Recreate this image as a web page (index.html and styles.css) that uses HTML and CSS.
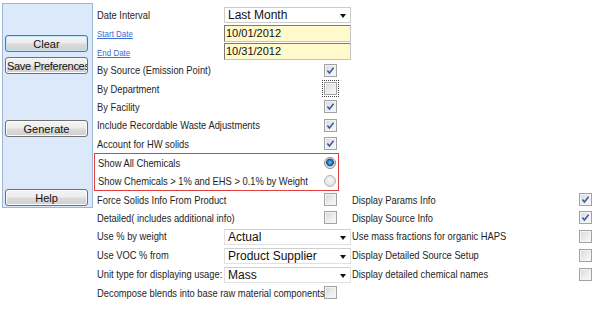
FILE: index.html
```html
<!DOCTYPE html>
<html>
<head>
<meta charset="utf-8">
<link rel="stylesheet" href="styles.css">
</head>
<body>
<div class="page">
  <aside class="panel">
    <button class="btn btn-focus">Clear</button>
    <button class="btn btn-clip btn-save">Save Preferences</button>
    <button class="btn btn-gen">Generate</button>
    <button class="btn btn-help">Help</button>
  </aside>
  <main class="form">
    <div class="col-left">
      <div class="row row-sel row-first"><span class="lbl">Date Interval</span><div class="select">Last Month<span class="arrow"></span></div></div>
      <div class="row row-date"><span class="cell"><a class="link" href="#">Start Date</a></span><div class="input">10/01/2012</div></div>
      <div class="row row-date"><span class="cell"><a class="link" href="#">End Date</a></span><div class="input">10/31/2012</div></div>
      <div class="row row-cb"><span class="lbl">By Source (Emission Point)</span><span class="cb on"><svg viewBox="0 0 11 11" width="11" height="11"><path d="M2.4 5.6 L4.4 8 L8.6 2.8" fill="none" stroke="#3856a6" stroke-width="1.5"/></svg></span></div>
      <div class="row row-cb"><span class="lbl">By Department</span><span class="cb focus"></span></div>
      <div class="row row-cb"><span class="lbl">By Facility</span><span class="cb on"><svg viewBox="0 0 11 11" width="11" height="11"><path d="M2.4 5.6 L4.4 8 L8.6 2.8" fill="none" stroke="#3856a6" stroke-width="1.5"/></svg></span></div>
      <div class="row row-cb"><span class="lbl">Include Recordable Waste Adjustments</span><span class="cb on"><svg viewBox="0 0 11 11" width="11" height="11"><path d="M2.4 5.6 L4.4 8 L8.6 2.8" fill="none" stroke="#3856a6" stroke-width="1.5"/></svg></span></div>
      <div class="row row-cb"><span class="lbl">Account for HW solids</span><span class="cb on"><svg viewBox="0 0 11 11" width="11" height="11"><path d="M2.4 5.6 L4.4 8 L8.6 2.8" fill="none" stroke="#3856a6" stroke-width="1.5"/></svg></span></div>
      <div class="redbox">
        <div class="row row-radio"><span class="lbl">Show All Chemicals</span><span class="radio on"></span></div>
        <div class="row row-radio"><span class="lbl">Show Chemicals &gt; 1% and EHS &gt; 0.1% by Weight</span><span class="radio"></span></div>
      </div>
    </div>
    <div class="bottom">
      <div class="row row-cb b-a"><span class="lbl">Force Solids Info From Product</span><span class="cb"></span></div>
      <div class="row row-cb row-right b-a"><span class="lbl">Display Params Info</span><span class="cb on"><svg viewBox="0 0 11 11" width="11" height="11"><path d="M2.4 5.6 L4.4 8 L8.6 2.8" fill="none" stroke="#3856a6" stroke-width="1.5"/></svg></span></div>
      <div class="row row-cb b-a"><span class="lbl">Detailed( includes additional info)</span><span class="cb"></span></div>
      <div class="row row-cb row-right b-a"><span class="lbl">Display Source Info</span><span class="cb on"><svg viewBox="0 0 11 11" width="11" height="11"><path d="M2.4 5.6 L4.4 8 L8.6 2.8" fill="none" stroke="#3856a6" stroke-width="1.5"/></svg></span></div>
      <div class="row row-sel b-b"><span class="lbl">Use % by weight</span><div class="select select-sm">Actual<span class="arrow"></span></div></div>
      <div class="row row-cb row-right b-b"><span class="lbl">Use mass fractions for organic HAPS</span><span class="cb"></span></div>
      <div class="row row-sel b-b"><span class="lbl">Use VOC % from</span><div class="select select-sm">Product Supplier<span class="arrow"></span></div></div>
      <div class="row row-cb row-right b-b"><span class="lbl">Display Detailed Source Setup</span><span class="cb"></span></div>
      <div class="row row-sel b-b"><span class="lbl">Unit type for displaying usage:</span><div class="select select-sm">Mass<span class="arrow"></span></div></div>
      <div class="row row-cb row-right b-b"><span class="lbl">Display detailed chemical names</span><span class="cb"></span></div>
      <div class="row row-cb b-a"><span class="lbl">Decompose blends into base raw material components</span><span class="cb"></span></div>
    </div>
  </main>
</div>
</body>
</html>
```
FILE: styles.css
```css
html, body {
  margin: 0;
  padding: 0;
  background: #ffffff;
}
body {
  font-family: "Liberation Sans", Arial, sans-serif;
  font-size: 11px;
  color: #1e1e1e;
}
.page {
  display: flex;
  align-items: flex-start;
  padding-top: 3px;
}
.panel {
  margin-left: 2px;
  width: 91px;
  height: 205px;
  box-sizing: border-box;
  border: 1px solid #9db6d3;
  background: #dbe9fb;
  display: flex;
  flex-direction: column;
  padding: 31px 4px 0 2px;
}
.btn {
  height: 17px;
  box-sizing: border-box;
  font-family: "Liberation Sans", Arial, sans-serif;
  font-size: 11px;
  color: #111;
  border: 1px solid #707070;
  border-radius: 3px;
  background: linear-gradient(#f4f4f4 0%, #ececec 48%, #dcdcdc 52%, #cfcfcf 100%);
  box-shadow: inset 0 0 0 1px #fbfbfb;
  padding: 0 1px;
  white-space: nowrap;
  overflow: hidden;
  line-height: 14px;
  text-align: center;
}
.btn-focus {
  border-color: #3c7fb1;
  box-shadow: inset 0 0 0 1px #c4e5f6;
}
.btn-clip { text-align: left; letter-spacing: -0.3px; }
.btn-save { margin-top: 5px; }
.btn-gen { margin-top: 46px; }
.btn-help { margin-top: 52px; }

.form {
  margin-left: 4px;
  padding-top: 2px;
  width: 495px;
}
.col-left {
  width: 255px;
  display: flex;
  flex-direction: column;
}
.row {
  display: grid;
  align-items: center;
  white-space: nowrap;
}
.row-sel {
  grid-template-columns: 127px 127px;
  height: 19px;
}
.row-date {
  grid-template-columns: 127px 127px;
  height: 18.5px;
}
.row-cb {
  grid-template-columns: minmax(0, 1fr) 13px;
  padding-right: 15px;
  height: 18.4px;
}
.lbl {
  display: inline-block;
  justify-self: start;
  transform: scaleX(0.85);
  transform-origin: 0 50%;
}
.cell { display: block; }
.link {
  display: inline-block;
  color: #3b6fd4;
  text-decoration: underline;
  font-size: 9.5px;
  transform: scaleX(0.84);
  transform-origin: 0 50%;
}
.select {
  position: relative;
  height: 16px;
  box-sizing: border-box;
  border: 1px solid #cdcdcd;
  background: #fff;
  font-family: "Liberation Sans", Arial, sans-serif;
  font-size: 12px;
  color: #111;
  line-height: 14px;
  padding-left: 3px;
  margin-top: 1px;
}
.select-sm { border-color: #e0e0e0; border-top-color: #cfcfcf; }
.arrow {
  position: absolute;
  right: 4px;
  top: 6px;
  width: 0;
  height: 0;
  border-left: 3.5px solid transparent;
  border-right: 3.5px solid transparent;
  border-top: 4px solid #111;
}
.input {
  height: 17px;
  box-sizing: border-box;
  border: 1px solid #c4c4c4;
  border-top-color: #7a7a7a;
  border-left-color: #7a7a7a;
  background: #fff9cc;
  font-family: "Liberation Sans", Arial, sans-serif;
  font-size: 11px;
  line-height: 15px;
  padding-left: 1px;
  color: #111;
}
.cb {
  width: 13px;
  height: 13px;
  box-sizing: border-box;
  border: 1px solid #a2a2a2;
  background: linear-gradient(135deg, #d8d8d8 0%, #eeeeee 60%, #fafafa 100%);
  box-shadow: inset 0 0 0 1px #f4f4f4;
  display: flex;
  align-items: center;
  justify-content: center;
}
.cb svg { display: block; }
.cb.focus {
  outline: 1px dotted #444;
  outline-offset: 1px;
}
.redbox {
  margin-left: -3px;
  width: 245px;
  box-sizing: border-box;
  border: 1px solid #e2403f;
  padding: 0 2px 0 3px;
}
.row-radio {
  grid-template-columns: minmax(0, 1fr) 12px;
  height: 18px;
}
.radio {
  width: 12px;
  height: 12px;
  box-sizing: border-box;
  border-radius: 50%;
  border: 1px solid #b4b4b4;
  background: radial-gradient(circle at 50% 40%, #fafafa 0%, #e2e2e2 70%, #d2d2d2 100%);
}
.radio.on {
  border-color: #8c8c8c;
  background: radial-gradient(circle at 50% 45%, #7fc3ee 0%, #2a77b8 30%, #0e4c86 48%, #dedede 56%, #eeeeee 100%);
}
.bottom {
  display: grid;
  grid-template-columns: 255px 240px;
  grid-auto-rows: auto;
}
.b-a { height: 18px; }
.b-b { height: 19px; }
.row-right { padding-right: 0; }
```
